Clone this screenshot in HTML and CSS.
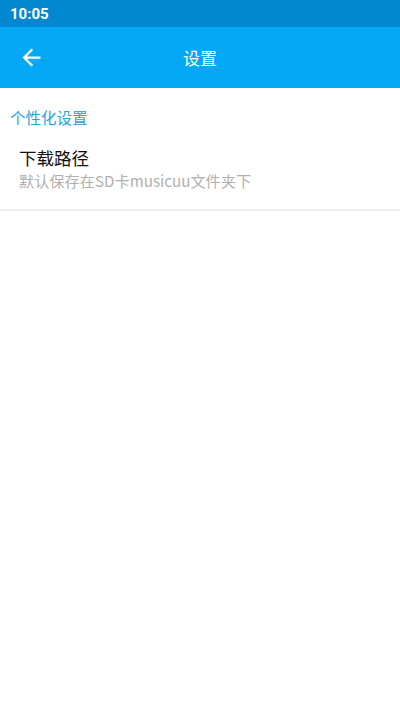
FILE: index.html
```html
<!DOCTYPE html>
<html lang="zh">
<head>
<meta charset="utf-8">
<link rel="stylesheet" href="styles.css">
</head>
<body>
<div class="status-bar"><span class="time">10:05</span></div>
<div class="toolbar">
  <svg class="back" width="27" height="27" viewBox="0 0 24 24"><path d="M20 11H7.83l5.59-5.59L12 4l-8 8 8 8 1.41-1.41L7.83 13H20v-2z" fill="#fff"/></svg>
  <div class="title">设置</div>
</div>
<div class="section-title">个性化设置</div>
<div class="item">
  <div class="item-title">下载路径</div>
  <div class="item-summary">默认保存在SD卡musicuu文件夹下</div>
</div>
<div class="divider"></div>
</body>
</html>
```
FILE: styles.css
```css
html, body {
  margin: 0;
  padding: 0;
  background: #fff;
  font-family: "Noto Sans CJK SC", Roboto, sans-serif;
}
.status-bar {
  height: 27px;
  background: #0288d1;
  display: flex;
  align-items: center;
  padding-left: 10px;
}
.time {
  color: #fff;
  font-family: Roboto, sans-serif;
  font-weight: bold;
  font-size: 15px;
}
.toolbar {
  height: 61px;
  background: #03a9f4;
  display: flex;
  align-items: center;
  position: relative;
}
.back {
  margin-left: 18px;
}
.title {
  position: absolute;
  left: 0;
  right: 0;
  text-align: center;
  color: #fff;
  font-size: 17px;
  pointer-events: none;
}
.section-title {
  color: #1ea4e6;
  font-size: 15.5px;
  padding: 17px 0 0 10px;
  line-height: 24px;
}
.item {
  padding: 16px 19px 18px 19px;
}
.item-title {
  font-size: 17.5px;
  color: #111;
  line-height: 25px;
}
.item-summary {
  font-size: 15.2px;
  color: #b0b0b0;
  line-height: 21px;
}
.divider {
  height: 2px;
  background: #ececec;
}
```
